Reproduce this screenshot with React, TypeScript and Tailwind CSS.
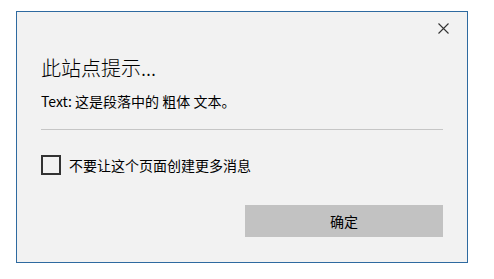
import React from "react";

export default function App() {
  const font = { fontFamily: '"Noto Sans CJK SC", "Liberation Sans", sans-serif' };
  return (
    <div className="w-[494px] h-[279px] bg-white overflow-hidden" style={font}>
      <div className="relative ml-[16px] mt-[11px] w-[452px] h-[252px] border border-[#2e6aa0] bg-[#f2f2f2] px-[24px] flex flex-col">
        <button className="absolute right-[12px] top-[4px] w-[24px] h-[24px] flex items-center justify-center">
          <svg width="11" height="11" viewBox="0 0 11 11" fill="none">
            <path d="M0.5 0.5 L10.5 10.5 M10.5 0.5 L0.5 10.5" stroke="#333" strokeWidth="1.1" />
          </svg>
        </button>
        <div className="mt-[42px] text-[20px] leading-[28px] font-light text-black">此站点提示...</div>
        <div className="mt-[9px] text-[14px] leading-[20px] text-black">Text: 这是段落中的 粗体 文本。</div>
        <div className="mt-[18px] h-px bg-[#c6c6c6]" />
        <div className="mt-[25px] flex items-center gap-[8px]">
          <div className="w-[20px] h-[20px] border-2 border-[#333333]" />
          <span className="text-[14px] leading-[20px] text-black">不要让这个页面创建更多消息</span>
        </div>
        <div className="mt-[30px] flex justify-end">
          <button className="w-[198px] h-[32px] bg-[#c2c2c2] text-[14px] text-black flex items-center justify-center">确定</button>
        </div>
      </div>
    </div>
  );
}
